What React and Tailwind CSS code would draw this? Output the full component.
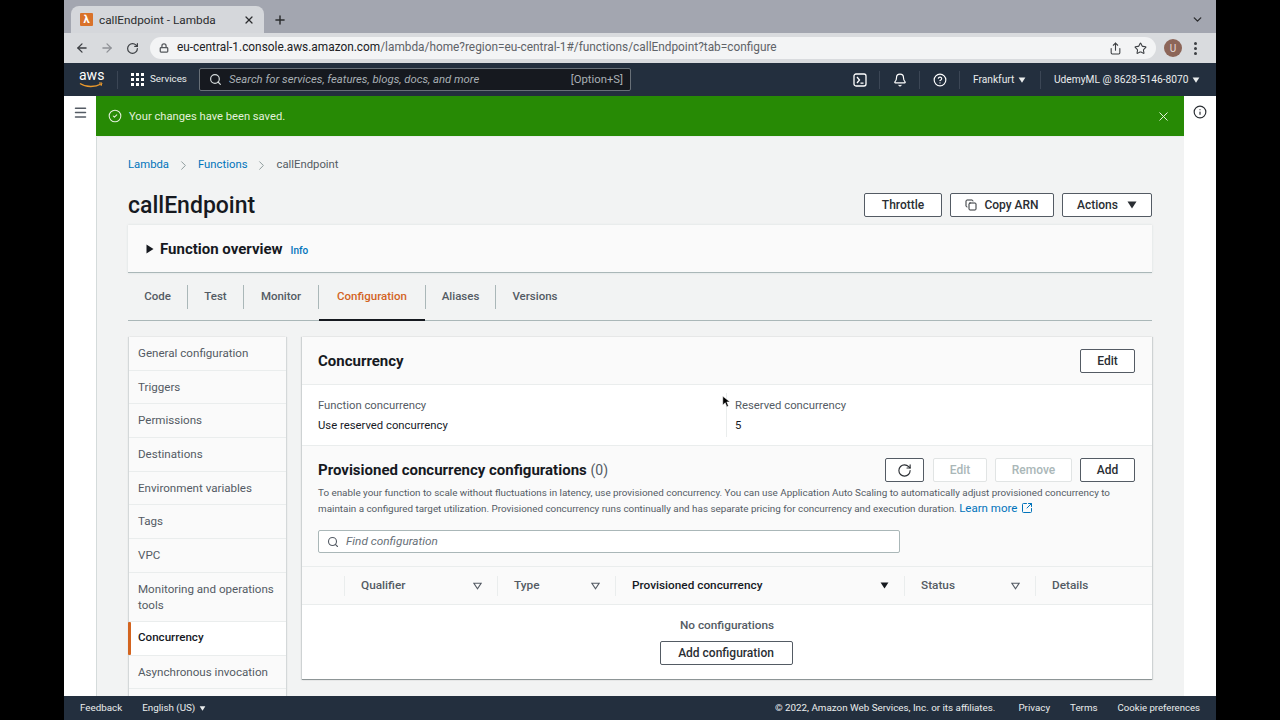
import React from "react";
import {
  ArrowLeft,
  ArrowRight,
  RotateCw,
  Lock,
  Share,
  Star,
  X,
  Plus,
  ChevronDown,
  ChevronRight,
  Search,
  Bell,
  CircleHelp,
  CircleCheck,
  Info,
  Copy,
  Menu,
  SquareArrowOutUpRight,
} from "lucide-react";

const sideItems = [
  "General configuration",
  "Triggers",
  "Permissions",
  "Destinations",
  "Environment variables",
  "Tags",
  "VPC",
  "Monitoring and operations tools",
  "Concurrency",
  "Asynchronous invocation",
];

const tabs = [
  { label: "Code", width: "w-[60px]" },
  { label: "Test", width: "w-[56px]" },
  { label: "Monitor", width: "w-[75px]" },
  { label: "Configuration", width: "w-[107px]" },
  { label: "Aliases", width: "w-[70px]" },
  { label: "Versions", width: "w-[78px]" },
];

function Caret({ className = "" }) {
  return (
    <svg viewBox="0 0 10 8" className={className} fill="currentColor">
      <path d="M0.5 0.5h9L5 7.5z" />
    </svg>
  );
}

function FilterIcon() {
  return (
    <svg viewBox="0 0 10 8" className="w-[9px] h-[8px] text-[#545b64]" fill="none" stroke="currentColor" strokeWidth="1.2">
      <path d="M1 1h8L5 7z" />
    </svg>
  );
}

function Btn({ children, className = "" }) {
  return (
    <button className={`h-6 flex items-center justify-center border border-[#545b64] rounded-[2px] bg-white text-[12px] font-medium text-[#2a2e33] ${className}`}>
      {children}
    </button>
  );
}

function DisabledBtn({ children, className = "" }) {
  return (
    <button className={`h-6 flex items-center justify-center border border-[#e1e4e4] rounded-[2px] bg-white text-[12px] font-medium text-[#aab7b8] ${className}`}>
      {children}
    </button>
  );
}

function BrowserChrome() {
  return (
    <div className="shrink-0">
      <div className="h-[33px] bg-[#a3a6b0] flex items-end relative">
        <div className="ml-[7px] w-[193px] h-[27px] bg-[#d5d7db] rounded-t-lg flex items-center pl-[9px] pr-[9px] text-[#2b2c2e] text-[11.8px]">
          <span className="w-[13px] h-[13px] bg-[#d9722a] rounded-[1px] flex items-center justify-center text-white text-[11px] font-bold leading-none mr-[6px]">λ</span>
          <span className="flex-1 mt-[2px]">callEndpoint - Lambda</span>
          <X size={12} strokeWidth={2.5} />
        </div>
        <Plus size={14} strokeWidth={2.5} className="ml-[9px] mb-[6px] text-[#2b2c2e]" />
        <ChevronDown size={13} strokeWidth={2.5} className="absolute right-[12px] top-[13px] text-[#2b2c2e]" />
      </div>
      <div className="h-[30px] bg-[#d9dbde] flex items-center text-[#3c3f43]">
        <ArrowLeft size={14} strokeWidth={2.2} className="ml-[11px]" />
        <ArrowRight size={14} strokeWidth={2.2} className="ml-[11px] text-[#8f9196]" />
        <RotateCw size={13} strokeWidth={2.2} className="ml-[12px]" />
        <div className="ml-[11px] w-[1006px] h-[22px] bg-[#f3f4f5] rounded-full flex items-center pl-[9px] pr-[9px]">
          <Lock size={10} strokeWidth={3} className="text-[#55585c]" />
          <span className="ml-[8px] text-[11.85px] text-[#5f6368]">
            <span className="text-[#202124]">eu-central-1.console.aws.amazon.com</span>/lambda/home?region=eu-central-1#/functions/callEndpoint?tab=configure
          </span>
          <Share size={13} className="ml-auto" />
          <Star size={13} className="ml-[12px]" />
        </div>
        <span className="ml-[8px] w-[18px] h-[18px] rounded-full bg-[#8c6558] text-[#e8dcd8] text-[10px] flex items-center justify-center">U</span>
        <span className="ml-[12px] flex flex-col gap-[2px]">
          <span className="w-[3px] h-[3px] rounded-full bg-[#3c3f43]" />
          <span className="w-[3px] h-[3px] rounded-full bg-[#3c3f43]" />
          <span className="w-[3px] h-[3px] rounded-full bg-[#3c3f43]" />
        </span>
      </div>
    </div>
  );
}

function AwsNav() {
  return (
    <div className="h-[33px] shrink-0 bg-[#232f3e] text-[#eaeded] flex items-center text-[10.2px] whitespace-nowrap">
      <div className="ml-[15px] w-[24px] h-[22px] relative shrink-0">
        <span className="block text-[14px] leading-[13px] text-center text-white">aws</span>
        <svg viewBox="0 0 24 7" className="absolute left-0 top-[13px] w-[24px] h-[7px]" fill="none">
          <path d="M1 1.5c6 4 15 4 21 .5" stroke="#ec9a2c" strokeWidth="1.4" />
          <path d="M20 1h3l-1 3" stroke="#ec9a2c" strokeWidth="1" />
        </svg>
      </div>
      <div className="ml-[14px] w-px h-[18px] bg-[#3b4655]" />
      <div className="ml-[13px] grid grid-cols-3 gap-[2px]">
        {Array.from({ length: 9 }).map((_, i) => (
          <span key={i} className="w-[3px] h-[3px] bg-white" />
        ))}
      </div>
      <span className="ml-[6px] w-[36px] text-[9.8px]">Services</span>
      <div className="ml-[13px] w-[432px] h-[23px] bg-[#16191f] border border-[#687078] rounded-[2px] flex items-center pl-[9px] pr-[7px] text-[11.3px]">
        <Search size={13} strokeWidth={2.2} className="text-[#d5dbdb]" />
        <span className="ml-[7px] mt-px italic text-[#a9b0b5]">Search for services, features, blogs, docs, and more</span>
        <span className="ml-auto mt-px text-[#a9b0b5]">[Option+S]</span>
      </div>
      <svg viewBox="0 0 14 14" className="ml-[222px] w-[14px] h-[14px]" fill="none" stroke="white" strokeWidth="1.3">
        <rect x="1" y="1" width="12" height="12" rx="2" />
        <path d="M4 4l2.5 3L4 10M7.5 10.2h3" />
      </svg>
      <div className="ml-[12px] w-px h-[18px] bg-[#3b4655]" />
      <Bell size={14} className="ml-[13px] text-white" />
      <div className="ml-[12px] w-px h-[18px] bg-[#3b4655]" />
      <CircleHelp size={14} className="ml-[13px] text-white" />
      <div className="ml-[12px] w-px h-[18px] bg-[#3b4655]" />
      <span className="ml-[13px] w-[41px]">Frankfurt</span>
      <Caret className="ml-[4px] w-[8px] h-[6px]" />
      <div className="ml-[14px] w-px h-[18px] bg-[#3b4655]" />
      <span className="ml-[13px] w-[135px]">UdemyML @ 8628-5146-8070</span>
      <Caret className="ml-[3px] w-[8px] h-[6px]" />
    </div>
  );
}

function Sidebar() {
  return (
    <div className="w-[157px] shrink-0 ml-px bg-[#fafafa] self-start text-[11.6px] shadow-[-1px_0_1px_rgba(0,28,36,0.12),1px_0_1px_rgba(0,28,36,0.12)]">
      {sideItems.map((label) =>
        label === "Concurrency" ? (
          <div key={label} className="relative h-[33.7px] flex items-center pl-[9px] bg-white border-b border-[#eaeded] font-medium text-[#16191f]">
            <span className="absolute -left-px top-0 bottom-0 w-[3px] rounded-[1px] bg-[#d3641f]" />
            {label}
          </div>
        ) : (
          <div key={label} className="min-h-[33.7px] py-[8px] pl-[9px] pr-[8px] border-b border-[#eaeded] text-[#545b64] leading-4">
            {label}
          </div>
        )
      )}
      <div className="h-[33.7px]" />
    </div>
  );
}

function ConcurrencyPanel() {
  return (
    <div className="flex-1 self-start border-b border-[#8d9596] shadow-[-1px_0_1px_rgba(0,28,36,0.15),1px_0_1px_rgba(0,28,36,0.15)]">
      <div className="h-[48px] bg-[#fafafa] border-b border-[#eaeded] flex items-center justify-between pl-[16px] pr-[17px]">
        <h3 className="text-[15px] font-bold text-[#16191f] mt-px">Concurrency</h3>
        <Btn className="w-[55px]">Edit</Btn>
      </div>
      <div className="h-[60px] bg-white grid grid-cols-2">
        <div className="pl-[16px] pt-[11px] leading-[20px] text-[11.3px]">
          <div className="text-[#545b64]">Function concurrency</div>
          <div className="text-[#16191f]">Use reserved concurrency</div>
        </div>
        <div className="pl-[8px] pt-[3px] leading-[20px] text-[11.3px] border-l border-[#eaeded] my-[8px] -ml-px">
          <div className="text-[#545b64]">Reserved concurrency</div>
          <div className="text-[#16191f]">5</div>
        </div>
      </div>
      <div className="bg-[#fafafa] border-t border-[#eaeded] pl-[16px] pr-[17px] pt-[12px] h-[121px]">
        <div className="flex items-center justify-between">
          <h3 className="text-[15px] font-bold text-[#16191f]">
            Provisioned concurrency configurations <span className="font-normal text-[14px] text-[#545b64]">(0)</span>
          </h3>
          <div className="flex gap-2">
            <Btn className="w-[39px] mr-px">
              <RotateCw size={15} strokeWidth={1.8} />
            </Btn>
            <DisabledBtn className="w-[54px]">Edit</DisabledBtn>
            <DisabledBtn className="w-[77px]">Remove</DisabledBtn>
            <Btn className="w-[55px]">Add</Btn>
          </div>
        </div>
        <p className="mt-[3px] text-[9.85px] leading-4 text-[#545b64]">
          To enable your function to scale without fluctuations in latency, use provisioned concurrency. You can use Application Auto Scaling to automatically adjust provisioned concurrency to maintain a configured target utilization. Provisioned concurrency runs continually and has separate pricing for concurrency and execution duration.{" "}
          <span className="text-[11.5px] leading-[12px] text-[#0073bb] whitespace-nowrap">
            Learn more
            <SquareArrowOutUpRight size={12} strokeWidth={2} className="inline ml-[4px] mb-[2px]" />
          </span>
        </p>
        <div className="mt-[13px] w-[582px] h-[23px] bg-white border border-[#aab7b8] rounded-[2px] flex items-center pl-[8px] text-[#687078] italic">
          <Search size={12} strokeWidth={2.2} className="text-[#545b64]" />
          <span className="ml-[7px]">Find configuration</span>
        </div>
      </div>
      <div className="h-[39px] bg-[#fafafa] border-y border-[#eaeded] grid grid-cols-[43px_153px_118px_289px_131px_1fr] items-center font-medium text-[#545b64]">
        <div className="h-[20px] border-r border-[#eaeded]" />
        <div className="h-[20px] border-r border-[#eaeded] flex items-center justify-between pl-[16px] pr-[15px]">
          Qualifier <FilterIcon />
        </div>
        <div className="h-[20px] border-r border-[#eaeded] flex items-center justify-between pl-[16px] pr-[15px]">
          Type <FilterIcon />
        </div>
        <div className="h-[20px] border-r border-[#eaeded] flex items-center justify-between pl-[16px] pr-[15px] text-[#16191f]">
          Provisioned concurrency <Caret className="w-[9px] h-[7px]" />
        </div>
        <div className="h-[20px] border-r border-[#eaeded] flex items-center justify-between pl-[16px] pr-[15px]">
          Status <FilterIcon />
        </div>
        <div className="pl-[16px]">Details</div>
      </div>
      <div className="h-[74px] bg-white flex flex-col items-center pt-[12px]">
        <div className="font-medium text-[#545b64] leading-4">No configurations</div>
        <Btn className="mt-[8px] w-[133px] -ml-[2px]">Add configuration</Btn>
      </div>
    </div>
  );
}

export default function App() {
  return (
    <div className="w-[1280px] h-[720px] bg-black overflow-hidden relative" style={{ fontFamily: 'Roboto, sans-serif' }}>
      <div className="mx-auto w-[1152px] h-full flex flex-col text-[11.8px]">
        <BrowserChrome />
        <AwsNav />
        <div className="flex-1 min-h-0 flex bg-[#f2f3f3]">
          <div className="w-8 shrink-0 bg-white flex justify-center pt-[9px]">
            <Menu size={15} strokeWidth={2.4} className="text-[#545b64]" />
          </div>
          <div className="flex-1 min-w-0 overflow-hidden">
            <div className="h-[41px] bg-[#278a05] flex items-center pl-[12px] pr-[13px] text-[#e3f0dc] border-b border-[#eaeded] text-[11.2px]">
              <CircleCheck size={14} strokeWidth={1.8} />
              <span className="ml-[7px] mt-[2px]">Your changes have been saved.</span>
              <X size={15} strokeWidth={1.6} className="ml-auto" />
            </div>
            <div className="pl-[31px] pr-8 border-l border-[#d5dbdb]">
              <div className="h-[56px] flex items-center text-[#0073bb] text-[11.3px]">
                <span>Lambda</span>
                <ChevronRight size={15} strokeWidth={1.5} className="mx-[7px] text-[#879596]" />
                <span>Functions</span>
                <ChevronRight size={15} strokeWidth={1.5} className="mx-[7px] text-[#879596]" />
                <span className="text-[#545b64]">callEndpoint</span>
              </div>
              <div className="h-6 mb-2 flex items-center justify-between">
                <h1 className="text-[23px] font-medium text-[#16191f] mt-[2px]">callEndpoint</h1>
                <div className="flex gap-2">
                  <Btn className="w-[78px]">Throttle</Btn>
                  <Btn className="w-[104px]">
                    <Copy size={12} className="mr-[7px]" />
                    Copy ARN
                  </Btn>
                  <Btn className="w-[90px]">
                    Actions
                    <Caret className="ml-[9px] w-[10px] h-[8px]" />
                  </Btn>
                </div>
              </div>
              <div className="h-[48px] bg-[#fafafa] border-b border-[#aab7b8] shadow-[0_0_2px_#d5dbdb] flex items-center pl-[17px]">
                <Caret className="w-[10px] h-[8px] -rotate-90 text-[#16191f]" />
                <span className="ml-[5px] mt-px text-[15px] font-bold text-[#16191f]">Function overview</span>
                <span className="ml-[8px] mt-[3px] text-[10px] font-medium text-[#0073bb]">Info</span>
              </div>
              <div className="h-[48px] flex items-center border-b border-[#aab7b8] relative text-[11.5px]">
                {tabs.map((t) => (
                  <div
                    key={t.label}
                    className={`h-[24px] ${t.width} pt-px flex items-center justify-center font-medium border-r border-[#aab7b8] last:border-r-0 relative ${t.label === "Configuration" ? "text-[#d3641f]" : "text-[#545b64]"}`}
                  >
                    {t.label}
                    {t.label === "Configuration" && <span className="absolute left-0 right-0 top-[34px] h-[2px] bg-[#16191f]" />}
                  </div>
                ))}
              </div>
              <div className="mt-4 flex gap-4">
                <Sidebar />
                <ConcurrencyPanel />
              </div>
            </div>
          </div>
          <div className="w-8 shrink-0 bg-white flex justify-center pt-[9px]">
            <Info size={14} strokeWidth={2} className="text-[#2a2e33]" />
          </div>
        </div>
        <div className="h-6 shrink-0 bg-[#232f3e] text-[#eaeded] text-[9.8px] flex items-center pl-4 pr-4 pt-px">
          <span>Feedback</span>
          <span className="ml-[20px]">English (US)</span>
          <Caret className="ml-[4px] w-[7px] h-[5px]" />
          <span className="ml-auto">© 2022, Amazon Web Services, Inc. or its affiliates.</span>
          <span className="ml-[23px]">Privacy</span>
          <span className="ml-[20px]">Terms</span>
          <span className="ml-[20px] text-[9.6px]">Cookie preferences</span>
        </div>
      </div>
      <svg viewBox="0 0 10 15" className="absolute left-[722px] top-[395px] w-[8px] h-[13px]">
        <path d="M1 1v11l3-3 2 5 2-1-2-5h4z" fill="black" stroke="white" strokeWidth="0.6" />
      </svg>
    </div>
  );
}
